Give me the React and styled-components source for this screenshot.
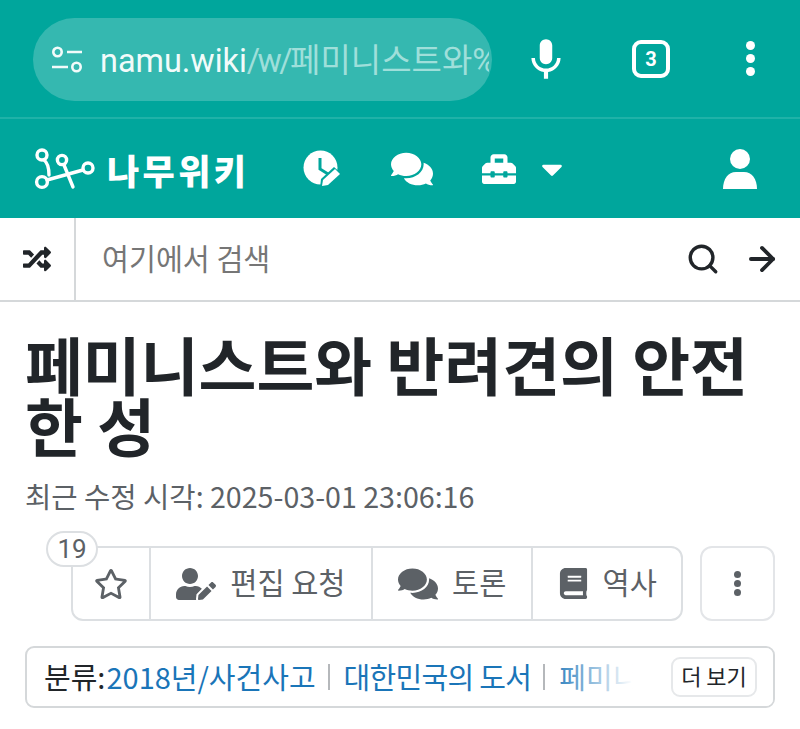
import styled, { createGlobalStyle } from "styled-components";
import {
  FaRandom,
  FaComments,
  FaToolbox,
  FaCaretDown,
  FaUserEdit,
  FaBook,
  FaRegStar,
} from "react-icons/fa";
import { MdMic } from "react-icons/md";
import { Search, ArrowRight } from "lucide-react";

const KR = `"Noto Sans CJK KR", "Noto Sans", sans-serif`;

const GlobalStyle = createGlobalStyle`
  html, body {
    margin: 0;
    padding: 0;
    background: #fff;
    font-family: ${KR};
  }
  * { box-sizing: border-box; }
`;

const Page = styled.div`
  width: 800px;
  height: 729px;
  overflow: hidden;
  background: #fff;
`;

/* browser chrome */
const BrowserBar = styled.div`
  height: 119px;
  background: #00a69c;
  border-bottom: 2px solid #1fb2a8;
  display: flex;
  align-items: flex-start;
  padding: 18px 0 0 33px;
`;

const UrlPill = styled.div`
  width: 459px;
  height: 83px;
  border-radius: 42px;
  background: #35b8b0;
  display: flex;
  align-items: center;
  padding: 0 0 0 18px;
`;

const UrlText = styled.div`
  margin-left: 17px;
  width: 389px;
  overflow: hidden;
  white-space: nowrap;
  font-family: Roboto, ${KR};
  font-size: 32.4px;
  color: #f2fbfa;
  line-height: 85px;
  height: 83px;
`;

const UrlPath = styled.span`
  color: #9fdfda;
  letter-spacing: -2.6px;
`;

const UrlRest = styled.span`
  color: #9fdfda;
  font-size: 33px;
`;

const MicSlot = styled.div`
  margin-left: 29px;
  width: 50px;
  height: 83px;
  display: flex;
  align-items: center;
  justify-content: center;
  color: #fff;
`;

const TabCount = styled.div`
  margin-left: 61px;
  margin-top: 22px;
  width: 38px;
  height: 38px;
  border: 4px solid #fff;
  border-radius: 9px;
  color: #fff;
  font: 700 20px/30px Roboto, sans-serif;
  text-align: center;
`;

const Dots = styled.div`
  margin-top: ${(p) => p.$top}px;
  margin-left: ${(p) => p.$left}px;
  display: flex;
  flex-direction: column;
  gap: ${(p) => p.$gap}px;
`;

const Dot = styled.span`
  width: ${(p) => p.$size}px;
  height: ${(p) => p.$size}px;
  border-radius: 50%;
  background: ${(p) => p.$color};
`;

/* wiki nav */
const NavBar = styled.nav`
  height: 99px;
  background: #00a69c;
  display: flex;
  align-items: center;
  padding: 0 0 0 34px;
  color: #fff;
`;

const Logo = styled.div`
  display: flex;
  align-items: center;
  width: 269px;
`;

const LogoWord = styled.span`
  margin-left: 10px;
  font-family: ${KR};
  font-weight: 900;
  font-size: 35px;
  line-height: 40px;
  letter-spacing: 3.4px;
  color: #fff;
  position: relative;
  top: 1px;
`;

const NavIcon = styled.span`
  display: flex;
  align-items: center;
  margin-left: ${(p) => p.$left}px;
`;

/* search */
const SearchBar = styled.div`
  height: 84px;
  border-bottom: 2px solid #d5d8da;
  display: flex;
  align-items: stretch;
`;

const ShuffleCell = styled.div`
  width: 76px;
  border-right: 2px solid #d5d8da;
  display: flex;
  align-items: center;
  justify-content: center;
  color: #212529;
`;

const SearchInput = styled.div`
  flex: 1;
  padding-left: 26px;
  font-size: 29.3px;
  line-height: 78px;
  color: #767676;
`;

const SearchButton = styled.span`
  display: flex;
  align-items: center;
  margin-right: ${(p) => p.$right}px;
  color: #212529;
`;

/* article head */
const Content = styled.main`
  padding: 0 25px;
`;

const Title = styled.h1`
  margin: 30px 0 0;
  font-size: 62.9px;
  font-weight: 700;
  line-height: 61px;
  color: #212529;
`;

const Meta = styled.div`
  margin-top: 23px;
  font-size: 28.6px;
  line-height: 38px;
  color: #5c6166;
  font-family: ${KR};
`;

const Actions = styled.div`
  margin-top: 31px;
  padding-left: 46px;
  display: flex;
  gap: 17px;
`;

const ButtonGroup = styled.div`
  position: relative;
  width: 612px;
  height: 75px;
  display: flex;
  border: 2px solid #dcdfe2;
  border-radius: 12px;
`;

const ActionButton = styled.div`
  width: ${(p) => p.$width}px;
  display: flex;
  align-items: center;
  justify-content: center;
  gap: 14px;
  font-size: 29.5px;
  color: #5c6166;
  border-right: ${(p) => (p.$last ? "none" : "2px solid #dcdfe2")};
`;

const ActionLabel = styled.span`
  margin-bottom: 5px;
`;

const StarCount = styled.span`
  position: absolute;
  top: -17px;
  left: -27px;
  width: 52px;
  height: 36px;
  border: 2px solid #dcdfe2;
  border-radius: 18px;
  background: #fff;
  text-align: center;
  font: 400 26px/32px Roboto, sans-serif;
  color: #5c6166;
`;

const MoreButton = styled.div`
  width: 75px;
  height: 75px;
  border: 2px solid #e3e5e8;
  border-radius: 12px;
  display: flex;
  align-items: center;
  justify-content: center;
`;

const CategoryBox = styled.div`
  position: relative;
  margin-top: 25px;
  height: 62px;
  border: 2px solid #d5d8da;
  border-radius: 9px;
  padding: 0 0 2px 17px;
  display: flex;
  align-items: center;
  font-size: 29px;
  color: #212529;
  white-space: nowrap;
  overflow: hidden;
`;

const CategoryLink = styled.span`
  color: #1a75b8;
  margin-left: ${(p) => p.$left || 0}px;
  letter-spacing: ${(p) => p.$spacing || 0}px;
`;

const Sep = styled.span`
  width: 2px;
  height: 26px;
  background: #b5b8bb;
  margin: 2px 14px 0 12px;
`;

const Fade = styled.div`
  position: absolute;
  top: 0;
  bottom: 0;
  right: 0;
  width: 225px;
  padding-right: 16px;
  display: flex;
  align-items: center;
  justify-content: flex-end;
  background: linear-gradient(to right, rgba(255, 255, 255, 0) 0, #fff 85px);
`;

const MoreCategories = styled.span`
  height: 40px;
  width: 86px;
  border: 2px solid #e6e8ea;
  border-radius: 9px;
  background: #fff;
  text-align: center;
  font-size: 22px;
  line-height: 33px;
  color: #212529;
`;

const TuneIcon = () => (
  <svg width="32" height="28" viewBox="0 0 32 28" fill="none" stroke="#f2fbfa" strokeWidth="2.6">
    <circle cx="6.5" cy="6" r="4.2" />
    <path d="M16 6h15M1 21h16" />
    <circle cx="25.5" cy="21" r="4.2" />
  </svg>
);

const TreeMark = () => (
  <svg width="63" height="42" viewBox="0 0 63 42" fill="none" stroke="#fff" strokeWidth="3.4" strokeLinecap="round">
    <circle cx="8" cy="7" r="5" />
    <circle cx="28" cy="12" r="4.6" />
    <circle cx="54" cy="20" r="5" />
    <circle cx="8" cy="34" r="5.4" />
    <path d="M13 32l36-10M10 12c4 3 5 8 5 15M30 17l9 22" />
  </svg>
);

const ClockEditIcon = () => (
  <svg width="38" height="38" viewBox="0 0 38 38">
    <circle cx="17.5" cy="17.5" r="17" fill="#fff" />
    <path d="M17 8v11l8 5" fill="none" stroke="#00a69c" strokeWidth="3" />
    <path d="M17 38l1-9L31 17l9 8-13 13z" fill="#00a69c" />
    <path d="M19 36l1-6 12-11 5 5-12 11z" fill="#fff" />
  </svg>
);

const UserIcon = () => (
  <svg width="36" height="40" viewBox="0 0 36 40" fill="#fff">
    <circle cx="18" cy="10" r="10" />
    <path d="M1 40c0-10 5-17 13-17h8c8 0 13 7 13 17z" />
  </svg>
);

const App = () => {
  return (
    <Page>
      <GlobalStyle />
      <BrowserBar>
        <UrlPill>
          <TuneIcon />
          <UrlText>
            namu.wiki
            <UrlPath>/w/</UrlPath>
            <UrlRest>페미니스트와%20반려견의%20안전한%20성</UrlRest>
          </UrlText>
        </UrlPill>
        <MicSlot>
          <MdMic size={50} />
        </MicSlot>
        <TabCount>3</TabCount>
        <Dots $top={23} $left={76} $gap={4}>
          <Dot $size={9} $color="#fff" />
          <Dot $size={9} $color="#fff" />
          <Dot $size={9} $color="#fff" />
        </Dots>
      </BrowserBar>

      <NavBar>
        <Logo>
          <TreeMark />
          <LogoWord>나무위키</LogoWord>
        </Logo>
        <ClockEditIcon />
        <NavIcon $left={50}>
          <FaComments size={42} />
        </NavIcon>
        <NavIcon $left={49}>
          <FaToolbox size={34} />
        </NavIcon>
        <NavIcon $left={19}>
          <FaCaretDown size={34} />
        </NavIcon>
        <NavIcon $left={153}>
          <UserIcon />
        </NavIcon>
      </NavBar>

      <SearchBar>
        <ShuffleCell>
          <FaRandom size={28} />
        </ShuffleCell>
        <SearchInput>여기에서 검색</SearchInput>
        <SearchButton $right={23}>
          <Search size={34} strokeWidth={2.4} />
        </SearchButton>
        <SearchButton $right={19}>
          <ArrowRight size={38} strokeWidth={2.4} />
        </SearchButton>
      </SearchBar>

      <Content>
        <Title>페미니스트와 반려견의 안전한 성</Title>
        <Meta>최근 수정 시각: 2025-03-01 23:06:16</Meta>
        <Actions>
          <ButtonGroup>
            <StarCount>19</StarCount>
            <ActionButton $width={78}>
              <FaRegStar size={34} />
            </ActionButton>
            <ActionButton $width={223}>
              <FaUserEdit size={40} />
              <ActionLabel>편집 요청</ActionLabel>
            </ActionButton>
            <ActionButton $width={161}>
              <FaComments size={40} />
              <ActionLabel>토론</ActionLabel>
            </ActionButton>
            <ActionButton $width={148} $last>
              <FaBook size={31} />
              <ActionLabel>역사</ActionLabel>
            </ActionButton>
          </ButtonGroup>
          <MoreButton>
            <Dots $top={0} $left={0} $gap={2}>
              <Dot $size={7} $color="#5c6166" />
              <Dot $size={7} $color="#5c6166" />
              <Dot $size={7} $color="#5c6166" />
            </Dots>
          </MoreButton>
        </Actions>
        <CategoryBox>
          분류:
          <CategoryLink $left={1}>2018년/사건사고</CategoryLink>
          <Sep />
          <CategoryLink $spacing={-0.7}>대한민국의 도서</CategoryLink>
          <Sep />
          <CategoryLink>페미니즘</CategoryLink>
          <Fade>
            <MoreCategories>더 보기</MoreCategories>
          </Fade>
        </CategoryBox>
      </Content>
    </Page>
  );
};

export default App;
